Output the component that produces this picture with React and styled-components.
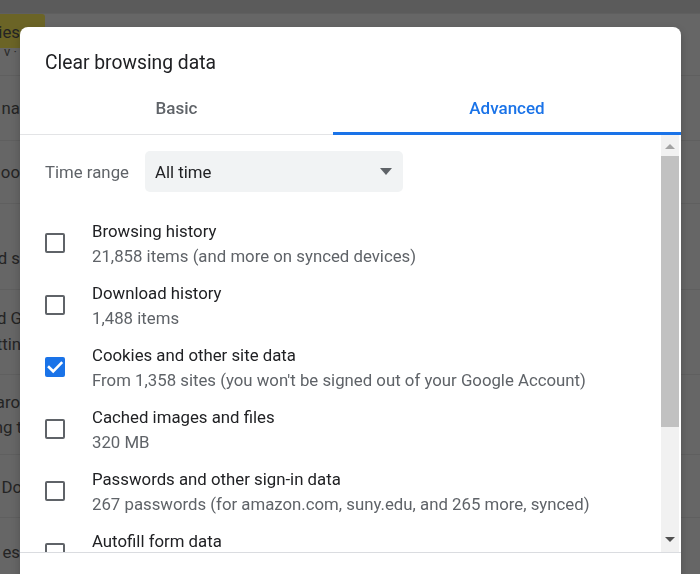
import styled, { createGlobalStyle } from "styled-components";

const GlobalStyle = createGlobalStyle`
  html, body {
    margin: 0;
    height: 100%;
    overflow: hidden;
  }
  body {
    background: #666666;
    font-family: Roboto, "Liberation Sans", sans-serif;
  }
`;

// page behind the dialog (dimmed)
const Page = styled.div`
  height: 574px;
  display: flex;
  flex-direction: column;
  background: #666666;
`;

const TopBand = styled.div`
  height: 13px;
  flex-shrink: 0;
  background: #5b5b5b;
`;

const BgRow = styled.div`
  height: ${p => p.$h}px;
  flex-shrink: 0;
  box-sizing: border-box;
  border-top: 1px solid #5f5f5f;
  padding-top: ${p => p.$pt}px;
  display: flex;
  flex-direction: column;
`;

const Frag = styled.div`
  width: ${p => p.$w || 20}px;
  overflow: hidden;
  display: flex;
  justify-content: flex-end;
  white-space: pre;
  font-size: 16.8px;
  line-height: ${p => p.$lh || 22}px;
  color: #242424;
`;

const Highlight = styled.span`
  display: block;
  flex-shrink: 0;
  height: 34px;
  line-height: 36px;
  padding-right: 25px;
  background: #6b6426;
  border-radius: 0 3px 3px 0;
`;

const SubFrag = styled(Frag)`
  font-size: 13px;
  line-height: 8px;
  color: #2c2c2c;
`;

// dialog
const Dialog = styled.div`
  position: fixed;
  left: 20px;
  top: 27px;
  width: 661px;
  height: 620px;
  background: #ffffff;
  border-radius: 8px;
  box-shadow: 0 4px 8px rgba(0, 0, 0, 0.22);
  display: flex;
  flex-direction: column;
  overflow: hidden;
`;

const Title = styled.h2`
  margin: 0;
  padding: 24px 25px 11px;
  font-size: 19.3px;
  line-height: 24px;
  font-weight: 400;
  color: #202124;
`;

const Tabs = styled.div`
  display: flex;
  height: 49px;
  flex-shrink: 0;
  box-shadow: inset 0 -1px 0 #e3e4e6;
`;

const Tab = styled.div`
  flex: ${p => (p.$basis ? `0 0 ${p.$basis}px` : 1)};
  box-sizing: border-box;
  padding-bottom: 2px;
  display: flex;
  align-items: center;
  justify-content: center;
  font-size: 17px;
  font-weight: 500;
  color: ${p => (p.$active ? "#1a73e8" : "#5f6368")};
  border-bottom: 3px solid ${p => (p.$active ? "#1a73e8" : "transparent")};
`;

const Body = styled.div`
  height: 417px;
  flex-shrink: 0;
  display: flex;
`;

const List = styled.div`
  flex: 1;
  overflow: hidden;
  padding: 16px 0 0 25px;
`;

const TimeRow = styled.div`
  display: flex;
  align-items: center;
  height: 41px;
  margin-bottom: 20px;
`;

const TimeLabel = styled.div`
  width: 100px;
  font-size: 16.8px;
  color: #5f6368;
`;

const Select = styled.div`
  width: 258px;
  height: 41px;
  box-sizing: border-box;
  padding: 0 11px 0 10px;
  background: #f1f3f4;
  border-radius: 5px;
  display: flex;
  align-items: center;
  justify-content: space-between;
  font-size: 16.8px;
  color: #202124;
`;

const Option = styled.div`
  display: flex;
  align-items: center;
  height: 62px;
  flex-shrink: 0;
`;

const Box = styled.div`
  width: 20px;
  height: 20px;
  flex-shrink: 0;
  box-sizing: border-box;
  margin-right: 27px;
  border-radius: 2px;
  border: ${p => (p.$checked ? "none" : "2px solid #5f6368")};
  background: ${p => (p.$checked ? "#1a73e8" : "transparent")};
  display: flex;
  align-items: center;
  justify-content: center;
`;

const OptionText = styled.div`
  display: flex;
  flex-direction: column;
  white-space: nowrap;
  font-size: 16.8px;
  line-height: 25px;
  padding-top: 1px;
`;

const OptionTitle = styled.span`
  color: #202124;
`;

const OptionSub = styled.span`
  color: #5f6368;
`;

const Scrollbar = styled.div`
  width: 18px;
  margin-right: 2px;
  padding-top: 1px;
  flex-shrink: 0;
  display: flex;
  flex-direction: column;
  background: #f1f1f1;
`;

const ScrollButton = styled.div`
  height: ${p => p.$h}px;
  flex-shrink: 0;
  display: flex;
  align-items: center;
  justify-content: center;
`;

const Thumb = styled.div`
  height: 271px;
  flex-shrink: 0;
  background: #c1c1c1;
`;

const Track = styled.div`
  flex: 1;
`;

const Footer = styled.div`
  flex: 1;
  border-top: 1px solid #dadce0;
`;

const bgRows = [
  { h: 65, pt: 21, lines: [{ t: "na" }] },
  { h: 63, pt: 20, lines: [{ t: "oo" }] },
  { h: 86, pt: 43, lines: [{ t: "d s" }] },
  { h: 85, pt: 15, lines: [{ t: "d G", w: 22 }, { t: "ttin", w: 21 }], lh: 26 },
  { h: 80, pt: 15, lines: [{ t: "aro" }, { t: "ng t", w: 22 }], lh: 25 },
  { h: 63, pt: 21, lines: [{ t: "Do", w: 22 }] },
  { h: 80, pt: 23, lines: [{ t: "es" }] },
];

const options = [
  { title: "Browsing history", sub: "21,858 items (and more on synced devices)" },
  { title: "Download history", sub: "1,488 items" },
  { title: "Cookies and other site data", sub: "From 1,358 sites (you won't be signed out of your Google Account)", checked: true },
  { title: "Cached images and files", sub: "320 MB" },
  { title: "Passwords and other sign-in data", sub: "267 passwords (for amazon.com, suny.edu, and 265 more, synced)" },
  { title: "Autofill form data", sub: "2,120 suggestions (synced)" },
  { title: "Site settings", sub: "12 sites" },
];

const Check = () => (
  <svg width="20" height="20" viewBox="0 0 20 20">
    <path d="M4 10.2 L8.2 14.3 L16.3 6" fill="none" stroke="#fff" strokeWidth="2.6" strokeLinecap="square" />
  </svg>
);

const Triangle = ({ w, h, color, up }) => (
  <svg width={w} height={h} viewBox={`0 0 ${w} ${h}`}>
    <polygon points={up ? `0,${h} ${w},${h} ${w / 2},0` : `0,0 ${w},0 ${w / 2},${h}`} fill={color} />
  </svg>
);

export default function App() {
  return (
    <>
      <GlobalStyle />
      <Page>
        <TopBand />
        <BgRow $h={62} $pt={0}>
          <Frag $w={45} $lh={34}>
            <Highlight>ies</Highlight>
          </Frag>
          <SubFrag $w={20}>y · </SubFrag>
        </BgRow>
        {bgRows.map((row, i) => (
          <BgRow key={i} $h={row.h} $pt={row.pt}>
            {row.lines.map((l, j) => (
              <Frag key={j} $w={l.w} $lh={row.lh}>{l.t}</Frag>
            ))}
          </BgRow>
        ))}
      </Page>

      <Dialog>
        <Title>Clear browsing data</Title>
        <Tabs>
          <Tab $basis={313}>Basic</Tab>
          <Tab $active>Advanced</Tab>
        </Tabs>
        <Body>
          <List>
            <TimeRow>
              <TimeLabel>Time range</TimeLabel>
              <Select>
                <span>All time</span>
                <Triangle w={12} h={7} color="#5f6368" />
              </Select>
            </TimeRow>
            {options.map(o => (
              <Option key={o.title}>
                <Box $checked={o.checked}>{o.checked && <Check />}</Box>
                <OptionText>
                  <OptionTitle>{o.title}</OptionTitle>
                  <OptionSub>{o.sub}</OptionSub>
                </OptionText>
              </Option>
            ))}
          </List>
          <Scrollbar>
            <ScrollButton $h={20}>
              <Triangle w={10} h={5} color="#a3a3a3" up />
            </ScrollButton>
            <Thumb />
            <Track />
            <ScrollButton $h={25}>
              <Triangle w={10} h={5} color="#505050" />
            </ScrollButton>
          </Scrollbar>
        </Body>
        <Footer />
      </Dialog>
    </>
  );
}
